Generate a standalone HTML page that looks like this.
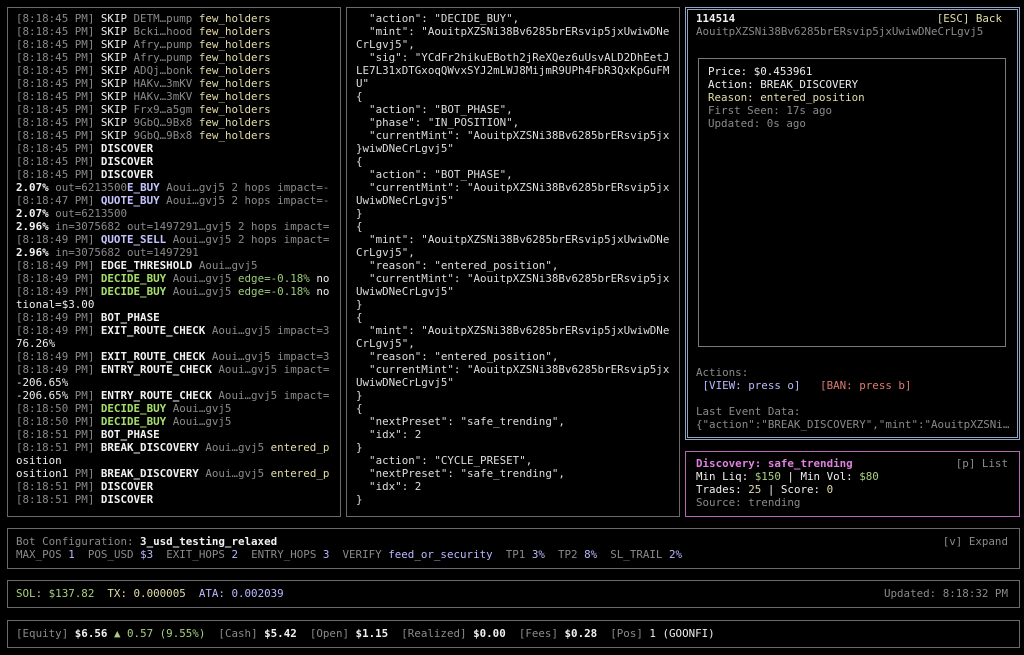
<!DOCTYPE html>
<html><head><meta charset="utf-8"><style>
*{margin:0;padding:0;box-sizing:border-box}
body{width:1024px;height:655px;background:#000;overflow:hidden;position:relative;font-family:"DejaVu Sans Mono","Liberation Mono",monospace;font-size:10.85px;color:#e6e6e6}
.p{position:absolute;border:1px solid #6a6a6a}
pre{position:absolute;font-family:inherit;font-size:10.85px;line-height:13px;white-space:pre}
.d{color:#8a8a8a}.w{color:#eee}.b{font-weight:bold;color:#f2f2f2}
.y{color:#e2dca8}.l{color:#c4c4ff;font-weight:bold}.g{color:#a6e06a;font-weight:bold}.gg{color:#9ccc7a}
.v{color:#b8b8ff}.r{color:#e07a70}.pk{color:#e080e0;font-weight:bold}.gr{color:#a8d080}
</style></head><body>
<div class="p" style="left:7px;top:7px;width:334px;height:510px"></div>
<pre style="left:16px;top:12px"><span class="d">[8:18:45 PM]</span> <span class="w">SKIP</span> <span class="d">DETM…pump</span> <span class="y">few_holders</span>
<span class="d">[8:18:45 PM]</span> <span class="w">SKIP</span> <span class="d">Bcki…hood</span> <span class="y">few_holders</span>
<span class="d">[8:18:45 PM]</span> <span class="w">SKIP</span> <span class="d">Afry…pump</span> <span class="y">few_holders</span>
<span class="d">[8:18:45 PM]</span> <span class="w">SKIP</span> <span class="d">Afry…pump</span> <span class="y">few_holders</span>
<span class="d">[8:18:45 PM]</span> <span class="w">SKIP</span> <span class="d">ADQj…bonk</span> <span class="y">few_holders</span>
<span class="d">[8:18:45 PM]</span> <span class="w">SKIP</span> <span class="d">HAKv…3mKV</span> <span class="y">few_holders</span>
<span class="d">[8:18:45 PM]</span> <span class="w">SKIP</span> <span class="d">HAKv…3mKV</span> <span class="y">few_holders</span>
<span class="d">[8:18:45 PM]</span> <span class="w">SKIP</span> <span class="d">Frx9…a5gm</span> <span class="y">few_holders</span>
<span class="d">[8:18:45 PM]</span> <span class="w">SKIP</span> <span class="d">9GbQ…9Bx8</span> <span class="y">few_holders</span>
<span class="d">[8:18:45 PM]</span> <span class="w">SKIP</span> <span class="d">9GbQ…9Bx8</span> <span class="y">few_holders</span>
<span class="d">[8:18:45 PM]</span> <span class="b">DISCOVER</span>
<span class="d">[8:18:45 PM]</span> <span class="b">DISCOVER</span>
<span class="d">[8:18:45 PM]</span> <span class="b">DISCOVER</span>
<span class="b">2.07%</span> <span class="d">out=6213500</span><span class="l">E_BUY</span> <span class="d">Aoui…gvj5 2 hops impact=-</span>
<span class="d">[8:18:47 PM]</span> <span class="l">QUOTE_BUY</span> <span class="d">Aoui…gvj5 2 hops impact=-</span>
<span class="b">2.07%</span> <span class="d">out=6213500</span>
<span class="b">2.96%</span> <span class="d">in=3075682 out=1497291…gvj5 2 hops impact=</span>
<span class="d">[8:18:49 PM]</span> <span class="l">QUOTE_SELL</span> <span class="d">Aoui…gvj5 2 hops impact=</span>
<span class="b">2.96%</span> <span class="d">in=3075682 out=1497291</span>
<span class="d">[8:18:49 PM]</span> <span class="b">EDGE_THRESHOLD</span> <span class="d">Aoui…gvj5</span>
<span class="d">[8:18:49 PM]</span> <span class="g">DECIDE_BUY</span> <span class="d">Aoui…gvj5</span> <span class="gg">edge=-0.18%</span> <span class="w">no</span>
<span class="d">[8:18:49 PM]</span> <span class="g">DECIDE_BUY</span> <span class="d">Aoui…gvj5</span> <span class="gg">edge=-0.18%</span> <span class="w">no</span>
<span class="w">tional=$3.00</span>
<span class="d">[8:18:49 PM]</span> <span class="b">BOT_PHASE</span>
<span class="d">[8:18:49 PM]</span> <span class="b">EXIT_ROUTE_CHECK</span> <span class="d">Aoui…gvj5 impact=3</span>
<span class="w">76.26%</span>
<span class="d">[8:18:49 PM]</span> <span class="b">EXIT_ROUTE_CHECK</span> <span class="d">Aoui…gvj5 impact=3</span>
<span class="d">[8:18:49 PM]</span> <span class="b">ENTRY_ROUTE_CHECK</span> <span class="d">Aoui…gvj5 impact=</span>
<span class="w">-206.65%</span>
<span class="w">-206.65%</span> <span class="d">PM]</span> <span class="b">ENTRY_ROUTE_CHECK</span> <span class="d">Aoui…gvj5 impact=</span>
<span class="d">[8:18:50 PM]</span> <span class="g">DECIDE_BUY</span> <span class="d">Aoui…gvj5</span>
<span class="d">[8:18:50 PM]</span> <span class="g">DECIDE_BUY</span> <span class="d">Aoui…gvj5</span>
<span class="d">[8:18:51 PM]</span> <span class="b">BOT_PHASE</span>
<span class="d">[8:18:51 PM]</span> <span class="b">BREAK_DISCOVERY</span> <span class="d">Aoui…gvj5</span> <span class="y">entered_p</span>
<span class="w">osition</span>
<span class="w">osition1</span> <span class="d">PM]</span> <span class="b">BREAK_DISCOVERY</span> <span class="d">Aoui…gvj5</span> <span class="y">entered_p</span>
<span class="d">[8:18:51 PM]</span> <span class="b">DISCOVER</span>
<span class="d">[8:18:51 PM]</span> <span class="b">DISCOVER</span></pre>

<div class="p" style="left:346px;top:7px;width:334px;height:510px"></div>
<pre style="left:356px;top:12px;color:#dedede">  "action": "DECIDE_BUY",
  "mint": "AouitpXZSNi38Bv6285brERsvip5jxUwiwDNe
CrLgvj5",
  "sig": "YCdFr2hikuEBoth2jReXQez6uUsvALD2DhEetJ
LE7L31xDTGxoqQWvxSYJ2mLWJ8MijmR9UPh4FbR3QxKpGuFM
U"
{
  "action": "BOT_PHASE",
  "phase": "IN_POSITION",
  "currentMint": "AouitpXZSNi38Bv6285brERsvip5jx
}wiwDNeCrLgvj5"
{
  "action": "BOT_PHASE",
  "currentMint": "AouitpXZSNi38Bv6285brERsvip5jx
UwiwDNeCrLgvj5"
}
{
  "mint": "AouitpXZSNi38Bv6285brERsvip5jxUwiwDNe
CrLgvj5",
  "reason": "entered_position",
  "currentMint": "AouitpXZSNi38Bv6285brERsvip5jx
UwiwDNeCrLgvj5"
}
{
  "mint": "AouitpXZSNi38Bv6285brERsvip5jxUwiwDNe
CrLgvj5",
  "reason": "entered_position",
  "currentMint": "AouitpXZSNi38Bv6285brERsvip5jx
UwiwDNeCrLgvj5"
}
{
  "nextPreset": "safe_trending",
  "idx": 2
}
  "action": "CYCLE_PRESET",
  "nextPreset": "safe_trending",
  "idx": 2
}</pre>

<div class="p" style="left:685px;top:7px;width:335px;height:433px;border:3px double #8ea4c4"></div>
<pre style="left:696px;top:12px"><span class="b">114514</span>
<span class="d">AouitpXZSNi38Bv6285brERsvip5jxUwiwDNeCrLgvj5</span></pre>
<pre style="right:22px;top:12px" class="y">[ESC] Back</pre>
<div class="p" style="left:698px;top:58px;width:308px;height:289px;border-color:#7a7a7a"></div>
<pre style="left:708px;top:65px"><span class="w">Price: $0.453961</span>
<span class="w">Action: BREAK_DISCOVERY</span>
<span class="y">Reason: entered_position</span>
<span class="d">First Seen: 17s ago</span>
<span class="d">Updated: 0s ago</span></pre>
<pre style="left:696px;top:366px"><span class="d">Actions:</span>
 <span class="v">[VIEW: press o]</span>   <span class="r">[BAN: press b]</span>

<span class="d">Last Event Data:</span>
<span class="d">{"action":"BREAK_DISCOVERY","mint":"AouitpXZSNi…</span></pre>

<div class="p" style="left:685px;top:451px;width:335px;height:66px;border-color:#b868b8"></div>
<pre style="left:696px;top:457px"><span class="pk">Discovery: safe_trending</span>
<span class="w">Min Liq: <span class="gr">$150</span> | Min Vol: <span class="gr">$80</span></span>
<span class="w">Trades: <span class="y">25</span> | Score: <span class="y">0</span></span>
<span class="d">Source: trending</span></pre>
<pre style="right:16px;top:457px" class="d">[p] List</pre>

<div class="p" style="left:7px;top:528px;width:1013px;height:41px"></div>
<pre style="left:16px;top:535px"><span class="d">Bot Configuration:</span> <span class="b">3_usd_testing_relaxed</span>
<span class="d">MAX_POS</span> <span class="v">1</span>  <span class="d">POS_USD</span> <span class="v">$3</span>  <span class="d">EXIT_HOPS</span> <span class="v">2</span>  <span class="d">ENTRY_HOPS</span> <span class="v">3</span>  <span class="d">VERIFY</span> <span class="v">feed_or_security</span>  <span class="d">TP1</span> <span class="v">3%</span>  <span class="d">TP2</span> <span class="v">8%</span>  <span class="d">SL_TRAIL</span> <span class="v">2%</span></pre>
<pre style="right:16px;top:535px" class="d">[v] Expand</pre>

<div class="p" style="left:7px;top:580px;width:1013px;height:28px"></div>
<pre style="left:16px;top:587px"><span class="gr">SOL: $137.82</span>  <span class="y">TX: 0.000005</span>  <span class="v">ATA: 0.002039</span></pre>
<pre style="right:16px;top:587px" class="d">Updated: 8:18:32 PM</pre>

<div class="p" style="left:7px;top:620px;width:1013px;height:28px"></div>
<pre style="left:16px;top:627px"><span class="d">[Equity]</span> <span class="b">$6.56</span> <span class="gr">▲ 0.57 (9.55%)</span>  <span class="d">[Cash]</span> <span class="b">$5.42</span>  <span class="d">[Open]</span> <span class="b">$1.15</span>  <span class="d">[Realized]</span> <span class="b">$0.00</span>  <span class="d">[Fees]</span> <span class="b">$0.28</span>  <span class="d">[Pos]</span> <span class="w">1 (GOONFI)</span></pre>
</body></html>
